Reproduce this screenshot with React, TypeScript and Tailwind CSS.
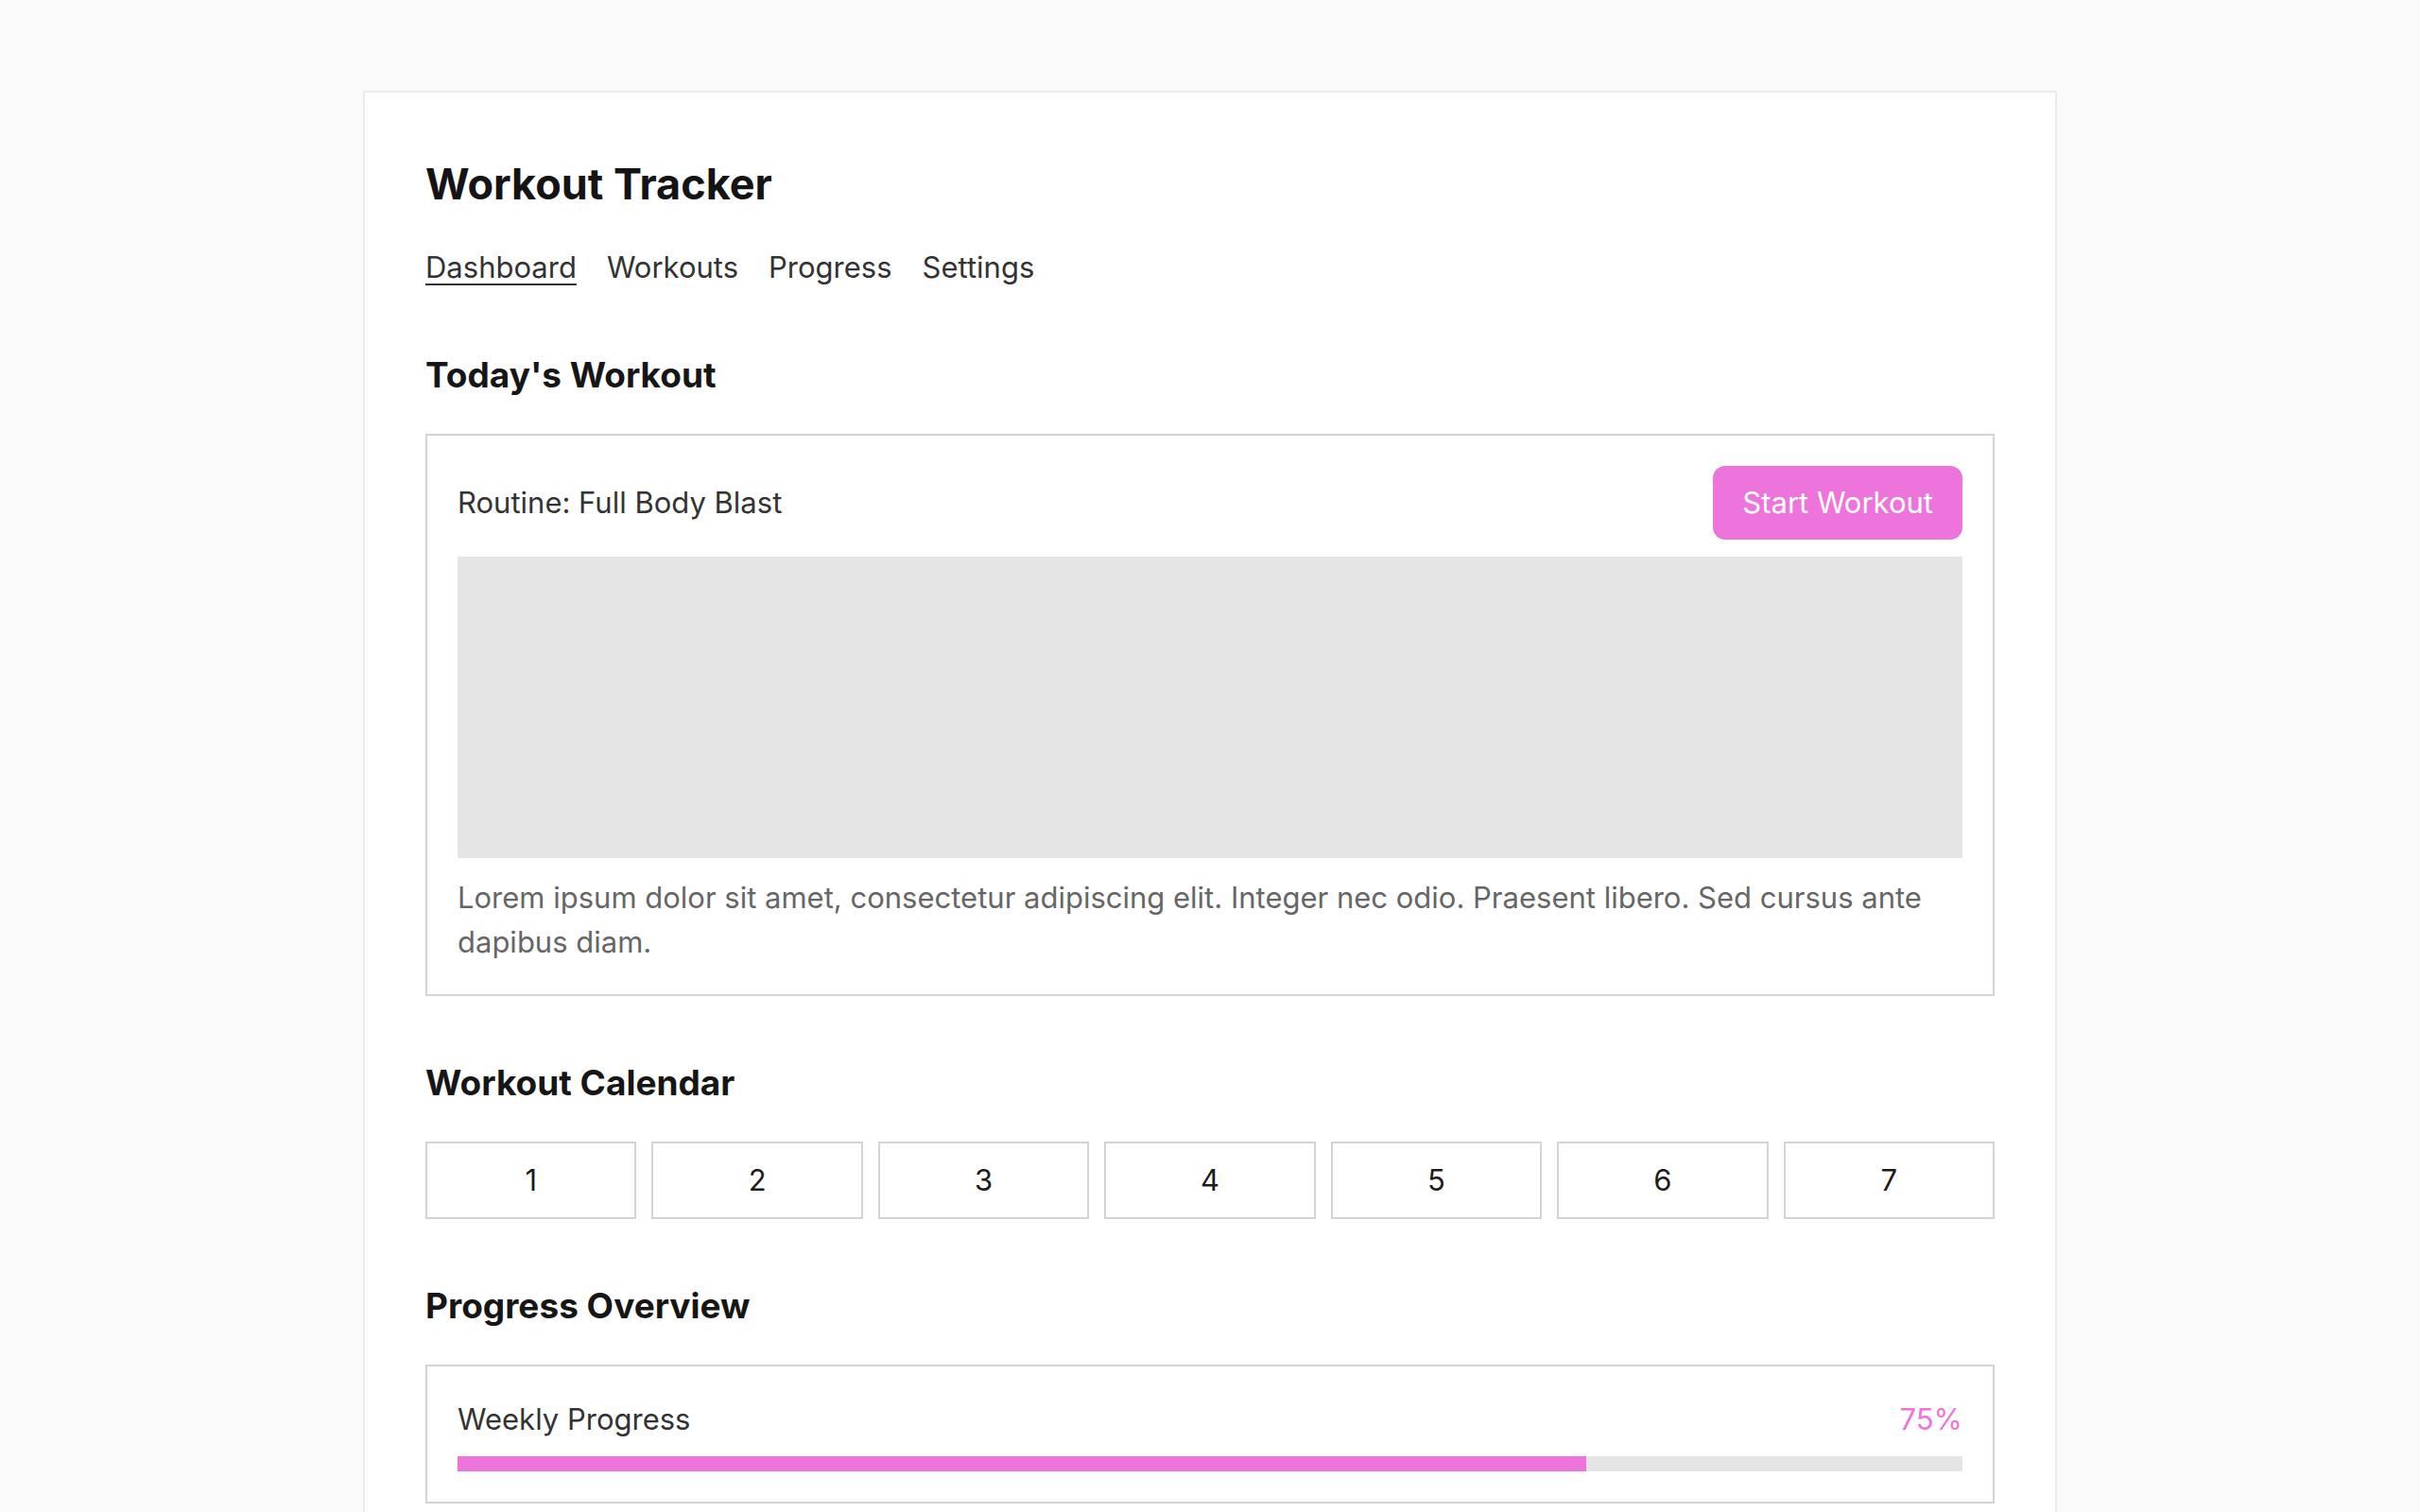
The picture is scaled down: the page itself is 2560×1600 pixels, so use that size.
import React from 'react';

const navItems = ['Dashboard', 'Workouts', 'Progress', 'Settings'];
const days = [1, 2, 3, 4, 5, 6, 7];

const SectionTitle: React.FC<{ children: React.ReactNode }> = ({ children }) => (
  <h2 className="mt-[70px] mb-[40px] text-[37px] leading-[44px] font-bold text-[#161616]">{children}</h2>
);

export default function App() {
  const progress = 75;

  return (
    <div
      className="min-h-screen bg-[#fafafa] pt-[96px]"
      style={{ fontFamily: 'Inter, "Noto Sans", sans-serif' }}
    >
      <div className="mx-auto w-[1792px] border-2 border-[#ebebeb] bg-white px-[64px] pt-[70px] pb-[64px]">
        <h1 className="text-[45px] leading-[54px] font-bold text-[#141414]">Workout Tracker</h1>

        <nav className="mt-[39px] flex gap-[32px] text-[31px] leading-[44px] text-[#333333]">
          {navItems.map((item, i) => (
            <a key={item} className={i === 0 ? 'underline underline-offset-[6px] decoration-2' : ''}>
              {item}
            </a>
          ))}
        </nav>

        <SectionTitle>Today's Workout</SectionTitle>
        <div className="border-2 border-[#d4d4d4] p-[32px]">
          <div className="flex items-center justify-between">
            <span className="text-[31px] text-[#333333]">Routine: Full Body Blast</span>
            <button className="h-[78px] rounded-[13px] bg-[#ec74db] px-[31px] text-[31px] text-white">
              Start Workout
            </button>
          </div>
          <div className="mt-[18px] h-[319px] bg-[#e5e5e5]" />
          <p className="mt-[18px] text-[31px] leading-[47px] text-[#666666]">
            Lorem ipsum dolor sit amet, consectetur adipiscing elit. Integer nec odio. Praesent libero. Sed cursus ante
            dapibus diam.
          </p>
        </div>

        <SectionTitle>Workout Calendar</SectionTitle>
        <div className="grid grid-cols-7 gap-[16px]">
          {days.map((d) => (
            <div
              key={d}
              className="flex h-[82px] items-center justify-center border-2 border-[#d4d4d4] text-[31px] text-[#1c1c1c]"
            >
              {d}
            </div>
          ))}
        </div>

        <SectionTitle>Progress Overview</SectionTitle>
        <div className="border-2 border-[#d4d4d4] px-[32px] pt-[32px] pb-[32px]">
          <div className="flex items-center justify-between text-[31px] leading-[47px]">
            <span className="text-[#333333]">Weekly Progress</span>
            <span className="text-[#ec74db]">{progress}%</span>
          </div>
          <div className="mt-[16px] h-[16px] bg-[#e5e5e5]">
            <div className="h-full bg-[#ec74db]" style={{ width: `${progress}%` }} />
          </div>
        </div>
      </div>
    </div>
  );
}
